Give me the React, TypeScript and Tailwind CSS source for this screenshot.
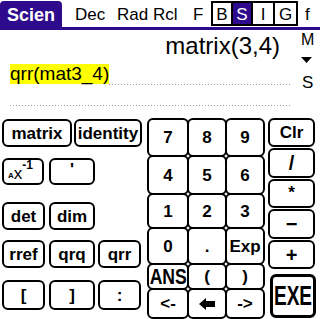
import type { ReactNode } from "react";

const blue = "bg-[#2e0b8c]";
const dotted =
  "h-[1px] bg-[linear-gradient(to_right,#9b9b9b_50%,transparent_50%)] bg-[length:3px_1px]";

function Key({ className = "", children }: { className?: string; children: ReactNode }) {
  return (
    <button
      type="button"
      className={`flex shrink-0 items-center justify-center rounded-[6px] border-2 border-black bg-white text-[17px] font-bold leading-none text-black ${className}`}
    >
      {children}
    </button>
  );
}

function BackArrow() {
  return (
    <svg width="16" height="12" viewBox="0 0 16 12">
      <polygon points="0,6 7,0 7,3 16,3 16,9 7,9 7,12" fill="black" />
    </svg>
  );
}

const padWidths = ["w-[42px]", "w-[40px] -ml-[2px]", "w-[40px] -ml-[2px]"];

const padRows: { h: string; keys: ReactNode[] }[] = [
  { h: "h-[39px]", keys: ["7", "8", "9"] },
  { h: "h-[40px]", keys: ["4", "5", "6"] },
  { h: "h-[36px]", keys: ["1", "2", "3"] },
  { h: "h-[38px]", keys: ["0", ".", "Exp"] },
  {
    h: "h-[27px]",
    keys: [<span key="a" className="inline-block scale-x-[0.8] text-[22px]">ANS</span>, "(", ")"],
  },
  { h: "h-[31px]", keys: ["<-", <BackArrow key="b" />, "->"] },
];

export default function App() {
  return (
    <div className="relative h-[319px] w-[320px] overflow-hidden bg-white font-['Liberation_Sans',Arial,sans-serif] text-black">
      {/* title bar */}
      <div className="flex h-[30px] border-b-[3px] border-[#2e0b8c] text-[17px] leading-none">
        <div className={`mt-[1px] flex w-[62px] items-center rounded-t-[4px] pl-[7px] pt-[2px] text-[18px] font-bold text-white ${blue}`}>
          Scien
        </div>
        <div className="ml-[13px] flex w-[42px] items-center pt-[2px]">Dec</div>
        <div className="flex w-[36px] items-center pt-[2px]">Rad</div>
        <div className="flex w-[40px] items-center pt-[2px]">Rcl</div>
        <div className="flex w-[18px] items-center pt-[2px]">F</div>
        <div className="mt-[1px] flex h-[25px] border-2 border-black">
          <div className="flex w-[18px] items-center justify-center pt-[1px]">B</div>
          <div className={`flex w-[20px] items-center justify-center border-l-2 border-black pt-[1px] text-white ${blue}`}>S</div>
          <div className="flex w-[22px] items-center justify-center border-l-2 border-black pt-[1px]">I</div>
          <div className="flex w-[23px] items-center justify-center border-l-2 border-black pt-[1px]">G</div>
        </div>
        <div className="ml-[7px] flex items-center pt-[2px]">f</div>
      </div>

      {/* display */}
      <div className="flex h-[88px]">
        <div className="w-[298px] pl-[10px]">
          <div className="mt-[4px] h-[24px] pr-[18px] text-right text-[24px] leading-[24px]">matrix(3,4)</div>
          <div className="mt-[6px] flex h-[21px] w-[280px]">
            <span className="h-[20px] bg-[#ffff00] text-[19px] leading-[20px]">qrr(mat3_4)</span>
            <div className={`flex-1 self-end ${dotted}`} />
          </div>
          <div className={`mt-[20px] w-[280px] ${dotted}`} />
        </div>
        <div className="flex flex-1 flex-col items-start pl-[3px]">
          <div className="mt-[2px] text-[16px] leading-[16px]">M</div>
          <svg className="mt-[9px]" width="11" height="6" viewBox="0 0 11 6">
            <polygon points="0,0 11,0 5.5,6" fill="black" />
          </svg>
          <div className="ml-[1px] mt-[11px] text-[17px] leading-[17px]">S</div>
        </div>
      </div>

      {/* keys */}
      <div className="flex">
        <div className="flex w-[142px] flex-col pl-[2px] pt-[1px]">
          <div className="flex h-[28px] gap-[2px]">
            <Key className="w-[70px]">matrix</Key>
            <Key className="w-[68px]">identity</Key>
          </div>
          <div className="mt-[11px] flex h-[27px]">
            <Key className="w-[42px] !items-end !justify-start pb-[3px] pl-[4px]">
              <span className="text-[8px] leading-none">A</span>
              <span className="text-[17px] font-normal leading-[12px]">x</span>
              <span className="mb-[9px] text-[12px] leading-none">-1</span>
            </Key>
            <Key className="ml-[5px] w-[46px] !items-start pt-[1px]">'</Key>
          </div>
          <div className="mt-[17px] flex h-[28px]">
            <Key className="w-[43px]">det</Key>
            <Key className="ml-[4px] w-[46px]">dim</Key>
          </div>
          <div className="mt-[10px] flex h-[28px]">
            <Key className="w-[43px]">rref</Key>
            <Key className="ml-[4px] w-[46px]">qrq</Key>
            <Key className="ml-[3px] w-[43px]">qrr</Key>
          </div>
          <div className="mt-[12px] flex h-[30px]">
            <Key className="w-[43px]">[</Key>
            <Key className="ml-[4px] w-[46px]">]</Key>
            <Key className="ml-[3px] w-[43px]">:</Key>
          </div>
        </div>

        <div className="ml-[5px] flex flex-col">
          {padRows.map((row, i) => (
            <div key={i} className={`flex ${row.h} ${i > 0 ? "-mt-[2px]" : ""}`}>
              {row.keys.map((k, j) => (
                <Key key={j} className={`h-full ${padWidths[j]}`}>
                  {k}
                </Key>
              ))}
            </div>
          ))}
        </div>

        <div className="ml-[3px] flex w-[47px] flex-col">
          <Key className="h-[29px] w-full">Clr</Key>
          <Key className="mt-[1px] h-[30px] w-full text-[20px]">/</Key>
          <Key className="mt-[1px] h-[29px] w-full items-start pt-[3px]">*</Key>
          <Key className="mt-[1px] h-[30px] w-full text-[20px]">−</Key>
          <Key className="mt-[1px] h-[29px] w-full text-[20px]">+</Key>
          <Key className="ml-[2px] mt-[5px] h-[44px] w-[46px] border-[3px]">
            <span className="inline-block scale-x-[0.68] text-[28px]">EXE</span>
          </Key>
        </div>
      </div>
    </div>
  );
}
